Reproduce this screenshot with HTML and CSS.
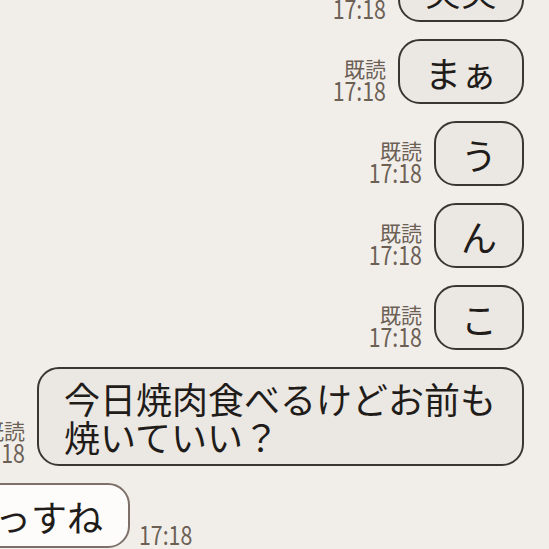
FILE: index.html
```html
<!DOCTYPE html>
<html lang="ja">
<head>
<meta charset="utf-8">
<link rel="stylesheet" href="styles.css">
</head>
<body>
<div class="chat">
  <div class="row sent">
    <div class="meta"><span class="read">既読</span><span class="time">17:18</span></div>
    <div class="bubble">笑笑</div>
  </div>
  <div class="row sent">
    <div class="meta"><span class="read">既読</span><span class="time">17:18</span></div>
    <div class="bubble">まぁ</div>
  </div>
  <div class="row sent">
    <div class="meta"><span class="read">既読</span><span class="time">17:18</span></div>
    <div class="bubble">う</div>
  </div>
  <div class="row sent">
    <div class="meta"><span class="read">既読</span><span class="time">17:18</span></div>
    <div class="bubble">ん</div>
  </div>
  <div class="row sent">
    <div class="meta"><span class="read">既読</span><span class="time">17:18</span></div>
    <div class="bubble">こ</div>
  </div>
  <div class="row sent">
    <div class="meta"><span class="read">既読</span><span class="time">17:18</span></div>
    <div class="bubble wide">今日焼肉食べるけどお前も焼いていい？</div>
  </div>
  <div class="row recv">
    <div class="bubble in">いいっすね</div>
    <div class="meta"><span class="time">17:18</span></div>
  </div>
</div>
</body>
</html>
```
FILE: styles.css
```css
html, body {
  margin: 0;
  padding: 0;
  background: #f1eeea;
}
body {
  width: 549px;
  height: 549px;
  overflow: hidden;
  font-family: "Noto Sans CJK JP", "Noto Sans", sans-serif;
}
.chat {
  height: 549px;
  display: flex;
  flex-direction: column;
  justify-content: flex-end;
  gap: 17px;
  padding: 0 25px 1px 0;
  box-sizing: border-box;
  overflow: hidden;
}
.row {
  display: flex;
  align-items: flex-end;
  gap: 12px;
  flex-shrink: 0;
}
.row.sent {
  justify-content: flex-end;
}
.row.recv {
  justify-content: flex-start;
  margin-left: -104px;
  gap: 9px;
}
.meta {
  display: flex;
  flex-direction: column;
  align-items: flex-end;
  color: #6c6055;
  padding-bottom: 3px;
  white-space: nowrap;
  flex-shrink: 0;
}
.recv .meta {
  align-items: flex-start;
}
.read {
  font-size: 21px;
  line-height: 21px;
}
.time {
  font-size: 26px;
  line-height: 22px;
  transform: scaleX(0.82);
  transform-origin: right center;
}
.recv .time {
  transform-origin: left center;
}
.bubble {
  box-sizing: border-box;
  flex-shrink: 0;
  min-height: 65px;
  display: flex;
  align-items: center;
  padding: 9.5px 25px;
  border: 2px solid #3b3633;
  border-radius: 22px;
  background: #ebe7e2;
  color: #1f1c1a;
  font-size: 36px;
  line-height: 38px;
  white-space: nowrap;
}
.bubble.wide {
  white-space: normal;
  max-width: 487px;
}
.bubble.in {
  background: #fdfcfa;
  border-color: #7e7069;
}
```
